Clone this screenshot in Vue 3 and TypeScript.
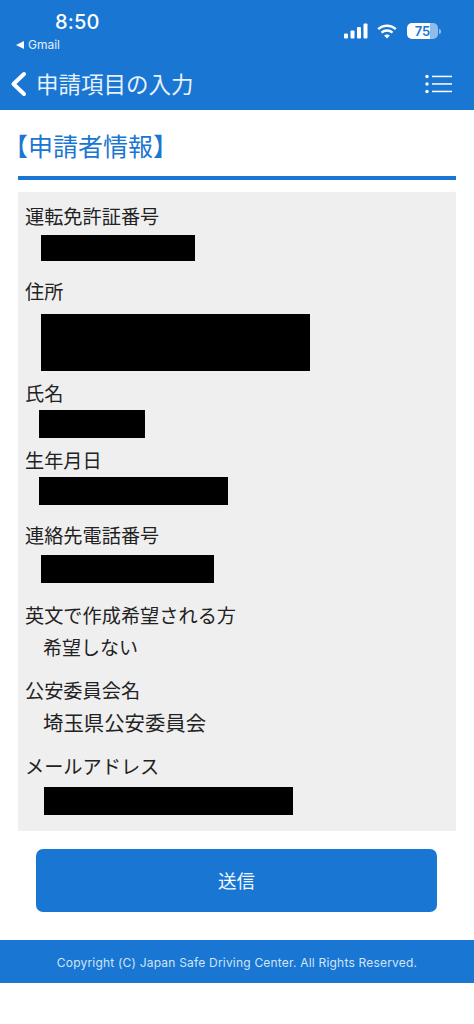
<script setup lang="ts">
interface Field {
  label: string;
  top: number;
  gap: number;
  value?: string;
  size?: number;
  left: number;
  width?: number;
  height?: number;
}

const fields: Field[] = [
  { label: "運転免許証番号", top: 0, gap: 4, left: 16, width: 154, height: 26 },
  { label: "住所", top: 17, gap: 8, left: 16, width: 269, height: 57 },
  { label: "氏名", top: 9, gap: 2, left: 14, width: 106, height: 28 },
  { label: "生年月日", top: 9, gap: 2, left: 14, width: 189, height: 28 },
  { label: "連絡先電話番号", top: 17, gap: 5, left: 16, width: 173, height: 28 },
  { label: "英文で作成希望される方", top: 19, gap: 4, left: 18, value: "希望しない", size: 19 },
  { label: "公安委員会名", top: 15, gap: 4, left: 18, value: "埼玉県公安委員会", size: 20.4 },
  { label: "メールアドレス", top: 16, gap: 6, left: 19, width: 249, height: 28 },
];
</script>

<template>
  <div class="page">
    <header class="header">
      <div class="status">
        <span class="time">8:50</span>
        <div class="status-icons">
          <svg class="signal" width="24" height="16" viewBox="0 0 24 16" fill="#fff">
            <rect x="0" y="10.5" width="4" height="5" rx="1" />
            <rect x="6.5" y="7.5" width="4" height="8" rx="1" />
            <rect x="13" y="4" width="4" height="11.5" rx="1" />
            <rect x="19.5" y="0.5" width="4" height="15" rx="1" />
          </svg>
          <svg width="20" height="15" viewBox="0 0 20 15" fill="none" stroke="#fff" stroke-width="2.4">
            <path d="M1.2 5.2C6 .6 14 .6 18.8 5.2" />
            <path d="M4.5 8.6c3-2.8 8-2.8 11 0" />
            <path d="M10 14.6l-2.9-3c1.6-1.4 4.2-1.4 5.8 0z" fill="#fff" stroke="none" />
          </svg>
          <div class="battery">
            <div class="battery-body"><span class="battery-num">75</span></div>
            <div class="battery-nub"></div>
          </div>
        </div>
      </div>
      <div class="back-app"><span class="back-tri"></span>Gmail</div>
      <div class="nav">
        <div class="nav-left">
          <svg width="17" height="26" viewBox="0 0 17 26" fill="none" stroke="#fff" stroke-width="4" stroke-linecap="round" stroke-linejoin="round">
            <path d="M14 3L3.5 13 14 23" />
          </svg>
          <h1 class="nav-title">申請項目の入力</h1>
        </div>
        <svg class="menu" width="27" height="20" viewBox="0 0 27 20" fill="#fff">
          <circle cx="2" cy="2.5" r="1.7" />
          <circle cx="2" cy="10" r="1.7" />
          <circle cx="2" cy="17.5" r="1.7" />
          <rect x="7" y="1.7" width="20" height="1.5" />
          <rect x="7" y="9.2" width="20" height="1.5" />
          <rect x="7" y="16.7" width="20" height="1.5" />
        </svg>
      </div>
    </header>

    <main class="main">
      <div class="section-head">
        <h2 class="section-title">【申請者情報】</h2>
      </div>
      <section class="panel">
        <div v-for="f in fields" :key="f.label" class="field" :style="{ marginTop: f.top + 'px' }">
          <div class="label">{{ f.label }}</div>
          <div
            v-if="f.value"
            class="value"
            :style="{ marginTop: f.gap + 'px', marginLeft: f.left + 'px', fontSize: f.size + 'px' }"
          >{{ f.value }}</div>
          <div
            v-else
            class="redact"
            :style="{ marginTop: f.gap + 'px', marginLeft: f.left + 'px', width: f.width + 'px', height: f.height + 'px' }"
          ></div>
        </div>
      </section>
      <button class="submit" type="button">送信</button>
    </main>

    <footer class="footer">Copyright (C) Japan Safe Driving Center. All Rights Reserved.</footer>
  </div>
</template>

<style>
html,
body {
  margin: 0;
  background: #fff;
}
</style>

<style scoped>
.page {
  width: 474px;
  height: 1024px;
  background: #fff;
  overflow: hidden;
  font-family: "Noto Sans CJK JP", "Inter", sans-serif;
}
.header {
  height: 110px;
  background: #1976d2;
  color: #fff;
}
.status {
  height: 38px;
  display: flex;
  justify-content: space-between;
  align-items: flex-start;
  padding: 10px 33px 0 55px;
  box-sizing: border-box;
}
.time {
  font-family: "Inter", sans-serif;
  font-size: 20px;
  font-weight: 500;
  line-height: 24px;
  letter-spacing: 0.2px;
}
.status-icons {
  display: flex;
  align-items: center;
  gap: 10px;
  margin-top: 13px;
}
.signal {
  margin-right: -1px;
}
.battery {
  display: flex;
  align-items: center;
  gap: 1px;
}
.battery-body {
  width: 31px;
  height: 16px;
  border-radius: 5px;
  background: linear-gradient(90deg, #fff 0 75%, #8fbce8 75% 100%);
  display: flex;
  align-items: center;
  justify-content: center;
}
.battery-num {
  font-family: "Inter", sans-serif;
  font-size: 13px;
  font-weight: 600;
  color: #1976d2;
  line-height: 16px;
}
.battery-nub {
  width: 2px;
  height: 5px;
  background: #8fbce8;
  border-radius: 0 2px 2px 0;
}
.back-app {
  display: flex;
  align-items: center;
  gap: 4px;
  font-family: "Inter", sans-serif;
  font-size: 12px;
  line-height: 14px;
  color: #e4effa;
  padding-left: 16px;
}
.back-tri {
  width: 0;
  height: 0;
  border-top: 4px solid transparent;
  border-bottom: 4px solid transparent;
  border-right: 8px solid #fff;
}
.nav {
  height: 58px;
  display: flex;
  align-items: center;
  justify-content: space-between;
  padding: 5px 22px 0 10px;
  box-sizing: border-box;
}
.nav-left {
  display: flex;
  align-items: center;
  gap: 9px;
}
.nav-title {
  margin: -2px 0 0;
  font-size: 22.5px;
  font-weight: 400;
  line-height: 30px;
  color: #e8f1fb;
  white-space: nowrap;
}
.main {
  padding: 0 18px;
}
.section-head {
  height: 66px;
  border-bottom: 4px solid #1976d2;
}
.section-title {
  margin: 0 0 0 -15px;
  font-size: 25px;
  font-weight: 400;
  line-height: 70px;
  color: #1976d2;
  white-space: nowrap;
}
.panel {
  margin-top: 12px;
  height: 639px;
  box-sizing: border-box;
  background: #efefef;
  padding: 11px 7px 15px;
}
.label,
.value {
  line-height: 26px;
  padding-bottom: 2px;
  color: #222;
  white-space: nowrap;
}
.label {
  font-size: 19.2px;
}
.redact {
  background: #000;
}
.submit {
  display: block;
  width: 401px;
  height: 63px;
  margin: 18px 0 0 18px;
  border: none;
  border-radius: 7px;
  background: #1976d2;
  color: #f2f7fd;
  font-family: "Noto Sans CJK JP", sans-serif;
  font-size: 18.5px;
  line-height: 63px;
  padding: 0;
}
.footer {
  margin-top: 28px;
  height: 43px;
  background: #1976d2;
  color: #d2e4f7;
  font-family: "Inter", sans-serif;
  font-size: 12px;
  line-height: 45px;
  text-align: center;
  letter-spacing: 0.2px;
  white-space: nowrap;
}
</style>
